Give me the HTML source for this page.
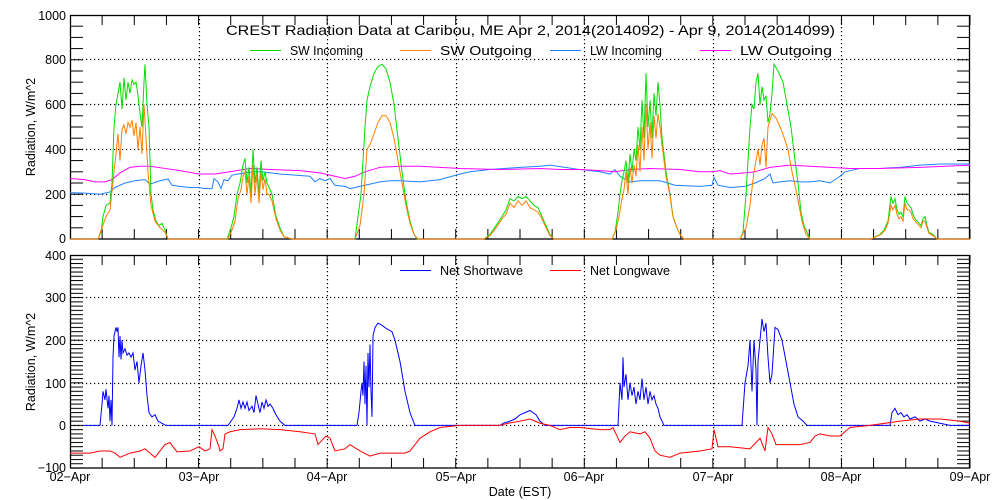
<!DOCTYPE html>
<html><head><meta charset="utf-8"><style>
html,body{margin:0;padding:0;background:#fff;width:1000px;height:500px;overflow:hidden}
svg{display:block}
text{font-family:"Liberation Sans",sans-serif;font-size:12.5px;fill:#000}
.d{stroke-width:1;fill:none;vector-effect:non-scaling-stroke}
</style></head><body>
<svg width="1000" height="500" viewBox="0 0 1000 500" xmlns="http://www.w3.org/2000/svg">
<defs>
<pattern id="yt1" x="0" y="14.5" width="20" height="11.2" patternUnits="userSpaceOnUse"><rect x="0" y="0" width="20" height="1" fill="#000"/></pattern>
<pattern id="yt2" x="0" y="254.5" width="20" height="4.26" patternUnits="userSpaceOnUse"><rect x="0" y="0" width="20" height="1" fill="#000"/></pattern>
<pattern id="xt" x="69.5" y="0" width="32.143" height="20" patternUnits="userSpaceOnUse"><rect x="0" y="0" width="1" height="20" fill="#000"/></pattern>
</defs>

<rect x="70" y="15" width="13" height="225" fill="url(#yt1)"/>
<rect x="957" y="15" width="13" height="225" fill="url(#yt1)"/>
<rect x="70" y="229" width="901" height="10" fill="url(#xt)"/>
<rect x="70" y="15" width="901" height="10" fill="url(#xt)"/>
<rect x="70" y="255" width="13" height="214" fill="url(#yt2)"/>
<rect x="957" y="255" width="13" height="214" fill="url(#yt2)"/>
<rect x="70" y="458" width="901" height="10" fill="url(#xt)"/>
<rect x="70" y="255" width="901" height="10" fill="url(#xt)"/>

<g stroke="#000" stroke-width="1.2" stroke-dasharray="1.2,2.8" fill="none">
<path d="M70 59.5H970M70 104.5H970M70 149.5H970M70 194.5H970"/>
<path d="M199.5 15V239M327.5 15V239M456.5 15V239M584.5 15V239M713.5 15V239M841.5 15V239"/>
<path d="M70 297.5H970M70 340.5H970M70 383.5H970M70 425.5H970"/>
<path d="M199.5 255V468M327.5 255V468M456.5 255V468M584.5 255V468M713.5 255V468M841.5 255V468"/>
</g>

<rect x="70.5" y="15.5" width="899" height="223.5" fill="none" stroke="#000" stroke-width="1.3"/>
<rect x="70.5" y="255.5" width="899" height="212.5" fill="none" stroke="#000" stroke-width="1.3"/>

<g transform="translate(0,239) scale(1,-0.224)">
<polyline class="d" stroke="#1e82ff" points="70,207 85,205 100,200 110,210 115,230 125,250 135,260 145,265 150,245 160,260 168,268 172,240 180,235 190,230 199,230 205,225 212,225 214,270 218,255 221,225 224,265 228,260 232,285 238,290 245,295 255,300 262,300 270,295 280,290 295,285 310,280 315,255 320,270 325,260 330,270 335,240 345,235 350,225 360,235 370,245 380,255 390,260 400,260 420,255 440,265 460,290 470,300 490,310 520,320 540,325 550,330 565,320 580,310 600,300 610,290 615,310 620,280 630,255 640,260 660,260 675,240 700,235 712,240 714,275 718,240 730,230 745,235 755,250 765,270 770,290 773,250 780,255 790,260 800,255 810,255 820,260 830,250 840,280 845,300 860,315 880,315 900,320 920,330 940,335 970,335"/>
<polyline class="d" stroke="#ff00ff" points="70,270 85,265 95,255 105,255 112,265 120,295 130,320 140,325 150,325 165,315 180,305 199,290 215,290 230,300 250,315 270,310 300,305 320,295 335,280 345,270 355,280 365,300 380,320 400,325 420,325 440,320 460,315 500,310 540,315 560,310 580,310 600,305 615,300 630,310 650,315 680,310 700,300 713,300 720,305 730,290 745,295 755,300 770,320 790,330 810,325 830,320 850,315 880,315 920,320 970,330"/>
<polyline class="d" stroke="#00e000" points="70,0 98,0 101,30 103,100 106,150 110,160 112,250 114,500 116,600 118,650 120,700 122,580 124,720 126,620 128,700 130,650 132,710 134,690 136,700 138,640 140,560 142,500 144,700 145,780 147,600 149,500 151,200 153,130 156,80 159,60 162,70 165,40 168,0 227,0 231,50 234,100 237,200 240,250 243,330 245,360 247,250 249,320 251,200 253,400 255,250 257,320 259,200 261,350 263,260 265,300 267,250 269,230 272,200 276,100 280,50 284,10 292,0 355,0 358,100 361,200 363,350 365,500 367,620 370,680 374,740 378,770 382,780 386,760 390,700 394,600 398,450 402,300 406,170 410,80 414,20 417,0 484,0 490,20 496,60 502,100 506,130 510,180 514,170 518,190 522,180 526,190 530,170 534,150 538,140 542,100 546,60 550,20 554,0 612,0 615,30 618,120 620,200 622,260 624,300 626,350 628,250 630,380 632,300 634,400 636,350 638,500 640,400 642,620 644,450 646,740 648,500 650,620 652,450 654,650 656,550 658,700 660,600 662,450 664,380 666,300 668,250 670,200 673,100 677,50 680,20 684,0 740,0 743,30 746,200 748,350 750,500 752,600 754,580 756,700 758,740 760,600 762,680 764,620 766,640 768,520 770,560 772,650 774,780 778,750 783,700 787,600 791,500 795,350 798,250 801,120 804,60 808,20 810,0 871,0 875,10 880,20 884,40 888,80 891,190 893,160 895,180 897,130 899,110 901,120 903,100 905,190 907,160 909,150 911,140 913,110 915,90 917,80 919,70 921,60 923,90 925,100 927,60 929,30 933,20 937,0 970,0"/>
<polyline class="d" stroke="#ff7f00" points="70,0 98,0 102,50 106,100 110,130 114,300 116,380 118,470 120,350 122,490 124,510 126,470 128,520 130,500 132,530 134,460 136,520 138,400 140,500 142,380 144,600 146,450 148,300 151,150 155,80 160,50 165,30 168,0 228,0 232,40 235,80 238,180 241,220 243,280 245,300 247,200 249,280 251,160 253,330 255,200 257,290 259,160 261,300 263,220 265,270 267,200 269,200 272,170 276,90 280,40 284,10 292,0 355,0 360,60 364,200 367,400 370,420 374,470 378,520 382,550 386,550 390,520 394,450 398,350 402,250 406,150 410,70 414,20 418,0 484,0 490,15 496,50 502,90 506,110 510,160 514,140 518,170 522,150 526,170 530,140 534,130 538,120 542,90 546,50 550,15 554,0 612,0 616,40 619,100 622,180 624,220 626,300 628,200 630,320 632,250 634,330 636,280 638,420 640,300 642,500 644,350 646,600 648,400 650,520 652,360 654,550 656,450 658,560 660,500 662,420 664,350 666,280 668,240 670,190 673,100 677,50 680,20 684,0 740,0 746,50 750,150 754,300 756,350 758,400 760,330 762,420 764,450 766,320 768,500 772,560 776,540 782,480 788,400 792,300 796,220 799,150 802,80 806,20 810,0 871,0 876,10 881,20 885,40 888,70 891,150 893,130 895,150 897,110 899,90 901,100 903,80 905,160 907,130 909,130 911,120 913,90 915,80 917,70 919,60 921,50 923,80 925,80 927,50 929,25 933,15 937,0 970,0"/>
</g>

<g transform="translate(0,425.4) scale(1,-0.426)">
<polyline class="d" stroke="#0000ff" points="83,0 100,0 102,50 103,80 105,60 106,85 108,40 109,70 110,10 111,60 112,0 113,160 114,210 116,230 117,220 118,230 119,160 120,210 121,155 122,200 123,170 125,180 127,165 129,170 131,160 133,170 135,130 137,150 139,100 141,140 143,170 145,130 147,70 149,30 152,20 155,25 158,10 162,5 166,0 228,0 231,10 234,20 237,40 239,60 241,40 243,55 245,40 247,55 249,35 252,45 254,30 256,70 258,50 260,30 262,55 264,40 266,60 268,45 270,50 273,40 276,25 280,10 285,0 357,0 359,30 361,80 362,100 363,70 364,150 365,50 366,140 367,0 368,170 369,90 370,190 371,80 372,20 373,210 375,230 378,240 382,235 386,228 392,220 395,200 400,150 405,80 410,30 415,0 500,0 503,5 510,10 515,15 520,25 525,30 530,35 536,25 540,10 545,0 618,0 620,100 622,60 623,160 624,90 626,120 628,60 630,100 632,70 634,90 636,50 638,80 640,60 642,110 644,60 646,90 648,50 650,80 652,60 654,70 656,50 658,40 660,20 664,0 742,0 745,100 748,140 750,200 752,80 754,200 756,130 757,0 758,150 760,200 762,250 764,220 766,240 768,160 770,100 772,120 775,230 778,225 782,200 786,150 790,100 794,50 798,20 803,10 807,0 890,0 892,30 895,40 898,25 901,30 904,20 907,25 910,15 915,20 920,10 925,15 930,10 940,5 950,0 970,0"/>
<polyline class="d" stroke="#ff0000" points="70,-65 90,-65 100,-60 110,-60 115,-65 120,-75 125,-70 130,-65 140,-60 145,-55 150,-65 155,-75 160,-60 165,-45 170,-40 173,-50 177,-62 190,-60 199,-50 205,-60 210,-55 212,-10 215,-25 219,-50 220,-60 223,-55 225,-20 230,-15 240,-10 260,-8 280,-10 300,-15 315,-20 318,-45 322,-35 326,-25 330,-30 335,-60 345,-55 350,-45 360,-60 370,-72 380,-65 405,-65 410,-60 415,-45 420,-30 430,-15 440,-5 460,0 500,0 508,5 520,10 530,15 540,5 550,0 560,-10 570,-5 580,-5 600,-10 610,-10 613,-5 615,-15 620,-40 625,-25 630,-15 640,-20 645,-15 650,-30 655,-60 660,-70 670,-75 680,-65 700,-60 712,-55 714,-10 718,-50 730,-50 750,-55 760,-30 765,-60 768,-5 772,-20 776,-45 790,-45 800,-45 810,-40 815,-25 820,-20 830,-25 840,-25 850,-5 870,0 900,10 920,15 940,15 960,10 970,5"/>
</g>

<text x="226" y="35" style="font-size:14px" textLength="609" lengthAdjust="spacingAndGlyphs">CREST Radiation Data at Caribou, ME   Apr  2, 2014(2014092) - Apr  9, 2014(2014099)</text>
<g stroke-width="1">
<line x1="250" y1="50.5" x2="281" y2="50.5" stroke="#00e000"/>
<line x1="400" y1="50.5" x2="431" y2="50.5" stroke="#ff7f00"/>
<line x1="550" y1="50.5" x2="581" y2="50.5" stroke="#1e82ff"/>
<line x1="700" y1="50.5" x2="731" y2="50.5" stroke="#ff00ff"/>
<line x1="400" y1="270.5" x2="431" y2="270.5" stroke="#0000ff"/>
<line x1="550" y1="270.5" x2="581" y2="270.5" stroke="#ff0000"/>
</g>
<text x="290" y="55" textLength="73" lengthAdjust="spacingAndGlyphs">SW Incoming</text>
<text x="440" y="55" textLength="92" lengthAdjust="spacingAndGlyphs">SW Outgoing</text>
<text x="590" y="55" textLength="72" lengthAdjust="spacingAndGlyphs">LW Incoming</text>
<text x="740" y="55" textLength="92" lengthAdjust="spacingAndGlyphs">LW Outgoing</text>
<text x="440" y="275" textLength="83" lengthAdjust="spacingAndGlyphs">Net Shortwave</text>
<text x="590" y="275" textLength="80" lengthAdjust="spacingAndGlyphs">Net Longwave</text>

<g text-anchor="end">
<text x="66" y="20">1000</text>
<text x="66" y="64">800</text>
<text x="66" y="109">600</text>
<text x="66" y="154">400</text>
<text x="66" y="199">200</text>
<text x="66" y="243">0</text>
<text x="66" y="260">400</text>
<text x="66" y="302">300</text>
<text x="66" y="345">200</text>
<text x="66" y="388">100</text>
<text x="66" y="430">0</text>
<text x="66" y="472">−100</text>
</g>
<text transform="translate(35,127) rotate(-90)" text-anchor="middle">Radiation, W/m^2</text>
<text transform="translate(35,362) rotate(-90)" text-anchor="middle">Radiation, W/m^2</text>

<g text-anchor="middle">
<text x="70" y="481">02−Apr</text>
<text x="199" y="481">03−Apr</text>
<text x="327" y="481">04−Apr</text>
<text x="456" y="481">05−Apr</text>
<text x="584" y="481">06−Apr</text>
<text x="713" y="481">07−Apr</text>
<text x="841" y="481">08−Apr</text>
<text x="970" y="481">09−Apr</text>
<text x="520" y="496">Date (EST)</text>
</g>
</svg>
</body></html>
